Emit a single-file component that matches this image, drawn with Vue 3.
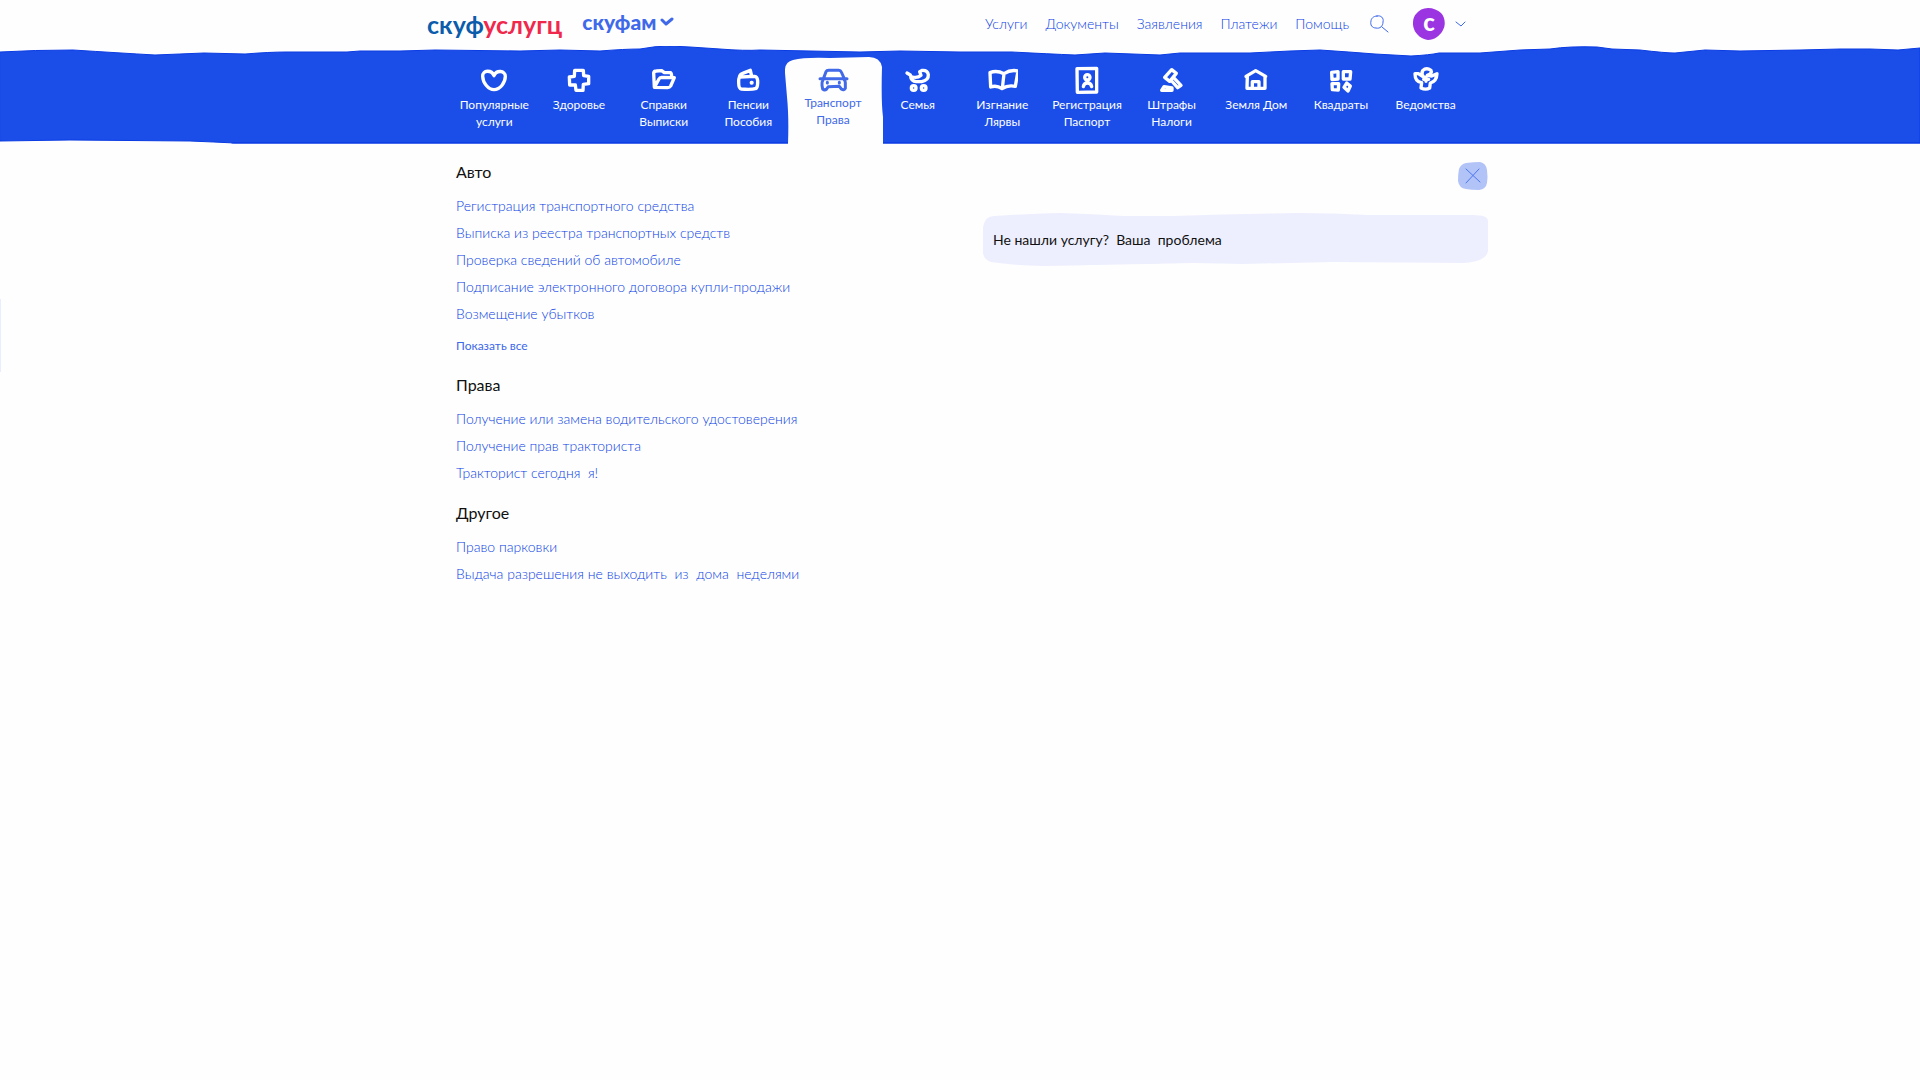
<script setup>
import { ref } from 'vue'

const menu = ['Услуги', 'Документы', 'Заявления', 'Платежи', 'Помощь']

const categories = [
  {
    lines: ['Популярные', 'услуги'],
    box: '117 27 96 96',
    d: 'M165 62C158 44 130 44 131 64C132 84 148 104 165 104C184 104 199 82 199 64C199 46 172 44 165 62Z',
  },
  {
    lines: ['Здоровье'],
    box: '369 27 96 96',
    d: 'M404 46L430 46L431 62L446 64L446 86L430 88L429 106L408 106L406 90L389 90L388 66L403 64Z',
  },
  {
    lines: ['Справки', 'Выписки'],
    box: '623 27 96 96',
    d: 'M642 96L640 54Q641 48 648 48L664 47L672 53L690 53Q694 54 694 66M642 97L656 72Q658 67 664 67L702 68L691 93Q688 98 682 98Z',
  },
  {
    lines: ['Пенсии', 'Пособия'],
    box: '38 42 96 96',
    d: 'M62 81Q57 84 58 98Q58 116 66 117Q96 120 111 115Q116 108 115 92Q114 80 106 79ZM60 82Q62 72 70 70L93 61L97 78M96 97L98 97L98 99L96 99Z',
  },
  {
    lines: ['Транспорт', 'Права'],
    active: true,
    box: '295 42 96 96',
    d: 'M304 86L385 86M315 84L322 65Q324 61 330 61L360 61Q366 61 368 66L376 84M313 90Q309 96 310 106L312 117Q318 122 324 117L329 110L362 109L368 117Q376 122 380 115L380 98Q380 92 376 88M326 97V99M362 97V99',
  },
  {
    lines: ['Семья'],
    box: '545 42 96 96',
    d: 'M560 69L570 75Q572 94 588 95L604 95Q625 91 624 74Q622 60 606 61L598 65L602 76Q592 85 576 81M587 114A7 7 0 1 1 573 114A7 7 0 1 1 587 114M617 114A7 7 0 1 1 603 114A7 7 0 1 1 617 114',
  },
  {
    lines: ['Изгнание', 'Лярвы'],
    box: '80 27 96 96',
    d: 'M92 53L94 96Q112 90 128 101Q146 89 168 94L176 48Q154 43 134 56Q112 45 92 53ZM134 56L129 100',
  },
  {
    lines: ['Регистрация', 'Паспорт'],
    box: '332 27 96 96',
    d: 'M350 41L409 40L409 111L351 112ZM389 67A8 8 0 1 1 373 67A8 8 0 1 1 389 67M369 95Q371 84 381 84Q392 84 394 95',
  },
  {
    lines: ['Штрафы', 'Налоги'],
    box: '585 27 96 96',
    d: 'M611 67L632 44L646 55L626 79ZM638 68L660 91L650 98L632 78M602 106L609 95L633 99L633 106Z',
  },
  {
    lines: ['Земля Дом'],
    box: '91 27 96 96',
    d: 'M109 64L138 47L168 64M113 64L112 100L166 100L166 66M128 98L128 80L148 80L148 98',
  },
  {
    lines: ['Квадраты'],
    box: '345 27 96 96',
    d: 'M365 52L384 50L384 72L366 74ZM400 50L422 50L420 72L400 72ZM366 86L386 86L385 105L367 104ZM410 84L421 93L414 108L402 97Z',
  },
  {
    lines: ['Ведомства'],
    box: '599 27 96 96',
    d: 'M614 56Q614 80 634 83L632 99Q646 106 658 99L660 84Q679 79 680 56L664 63L651 61Q667 54 662 46Q648 36 637 47Q632 56 640 66L624 56ZM647 66V79M640 73H655',
  },
]

const groups = [
  {
    title: 'Авто',
    links: [
      'Регистрация транспортного средства',
      'Выписка из реестра транспортных средств',
      'Проверка сведений об автомобиле',
      'Подписание электронного договора купли-продажи',
      'Возмещение убытков',
    ],
    more: 'Показать все',
  },
  {
    title: 'Права',
    links: [
      'Получение или замена водительского удостоверения',
      'Получение прав тракториста',
      'Тракторист сегодня \u00a0я!',
    ],
  },
  {
    title: 'Другое',
    links: ['Право парковки', 'Выдача разрешения не выходить \u00a0из \u00a0дома \u00a0неделями'],
  },
]

const query = ref('')
</script>

<template>
  <div class="page">
    <header class="top">
      <div class="top-inner">
        <a class="logo" href="#"><span class="logo-blue">скуф</span><span class="logo-red">услугц</span></a>
        <button class="audience" type="button">
          скуфам
          <svg width="14" height="10" viewBox="0 0 14 10" aria-hidden="true">
            <path d="M2 3L6 7L12 2" />
          </svg>
        </button>
        <nav class="menu">
          <a v-for="item in menu" :key="item" href="#">{{ item }}</a>
        </nav>
        <button class="search" type="button" aria-label="Поиск">
          <svg width="20" height="20" viewBox="0 0 20 20" aria-hidden="true">
            <path d="M8 2C12 1 15 4 14 8C14 12 11 15 7 14C3 14 1 11 2 7C2 5 4 2 8 2ZM13 13L19 18" />
          </svg>
        </button>
        <button class="user" type="button" aria-label="Профиль">
          <span class="avatar">
            <svg width="32" height="32" viewBox="0 0 32 32" aria-hidden="true">
              <path d="M15 0C20 0 25 2 28 5C32 9 33 17 30 22C27 28 21 32 15 32C9 31 3 27 1 21C-1 16 0 9 3 6C6 2 10 0 15 0Z" />
            </svg>
            <b>с</b>
          </span>
          <svg class="user-arrow" width="12" height="8" viewBox="0 0 12 8" aria-hidden="true">
            <path d="M1 2L6 6L10 2" />
          </svg>
        </button>
      </div>
    </header>

    <nav class="band">
      <svg class="band-bg" viewBox="0 0 1920 98" preserveAspectRatio="none" aria-hidden="true">
        <path
          class="band-fill"
          d="M0 6Q35 4 73 4Q120 7 155 9Q180 8 204 7L245 8Q270 6 286 6L347 6L360 5L400 5L435 4L520 5L560 4L600 5Q625 3 640 3Q655 0 670 0L690 1L720 3Q745 5 760 4Q810 5 860 6L900 5L960 6L1012 6Q1050 8 1075 9L1105 7L1160 9L1180 7L1250 7L1290 5L1320 4Q1350 6 1375 8L1411 10Q1430 9 1439 7L1480 7L1520 4L1550 3Q1570 0 1597 1L1612 3L1640 4Q1665 7 1675 7L1705 4L1740 5L1800 4L1840 3L1870 3L1898 4L1920 2V97H235Q215 96 190 95L70 94L0 95Z"
        />
        <path class="band-line" d="M232 97H1920" />
      </svg>
      <ul class="categories">
        <li v-for="cat in categories" :key="cat.lines[0]">
          <a href="#" class="category" :class="{ active: cat.active }">
            <svg v-if="cat.active" class="tab" viewBox="0 0 98 87" aria-hidden="true">
              <path d="M0 16Q-1 5 8 3Q20 0 45 1L84 0Q95 0 97 10Q96 45 98 60L98 87L3 87Q4 60 2 40Z" />
            </svg>
            <svg class="icon" :viewBox="cat.box" aria-hidden="true"><path :d="cat.d" /></svg>
            <span v-for="line in cat.lines" :key="line" class="label">{{ line }}</span>
          </a>
        </li>
      </ul>
    </nav>

    <main class="content">
      <div class="column">
        <section v-for="group in groups" :key="group.title" class="group">
          <h2>{{ group.title }}</h2>
          <ul>
            <li v-for="link in group.links" :key="link"><a href="#">{{ link }}</a></li>
          </ul>
          <button v-if="group.more" class="more" type="button">{{ group.more }}</button>
        </section>
      </div>
      <aside class="side">
        <button class="close" type="button" aria-label="Закрыть">
          <svg width="30" height="28" viewBox="0 0 30 28" aria-hidden="true">
            <path class="close-bg" d="M8 1Q16 0 22 0Q28 1 29 8Q30 15 29 21Q28 27 21 28Q13 28 8 27Q1 26 0 19Q0 12 1 7Q3 2 8 1Z" />
            <path class="close-x" d="M8 7L22 20M21 7L8 21" />
          </svg>
        </button>
        <div class="finder">
          <svg class="finder-bg" viewBox="0 0 505 53" preserveAspectRatio="none" aria-hidden="true">
            <path d="M0 14Q2 3 11 3Q40 1 78 0Q110 1 140 3L190 3Q250 1 315 0Q350 0 385 2L490 2Q505 2 505 8L505 38Q503 49 480 50L350 49L260 51L210 50Q120 52 60 53Q25 52 8 49Q1 47 0 40Z" />
          </svg>
          <input v-model="query" type="text" aria-label="Поиск услуги" placeholder="Не нашли услугу?  Ваша  проблема" />
        </div>
      </aside>
    </main>
    <div class="edge"></div>
  </div>
</template>

<style>
body {
  margin: 0;
  background: #fff;
}
</style>

<style scoped>
.page {
  position: relative;
  min-height: 100vh;
  background: #fefefe;
  color: #111;
  font-family: 'Lato', 'Noto Sans', sans-serif;
  font-size: 14px;
}
a {
  color: #0a3fe4;
  text-decoration: none;
}
ul {
  margin: 0;
  padding: 0;
  list-style: none;
}
button {
  padding: 0;
  border: 0;
  background: none;
  color: #3c68ea;
  font-family: inherit;
  cursor: pointer;
}
svg {
  display: block;
  fill: none;
  stroke-linecap: round;
  stroke-linejoin: round;
}

.top-inner {
  display: flex;
  align-items: center;
  box-sizing: border-box;
  max-width: 1066px;
  height: 46px;
  margin: 0 auto;
  padding-top: 1px;
}
.logo {
  font-size: 25px;
  font-weight: 700;
  line-height: 42px;
}
.logo-blue {
  color: #0b5cab;
}
.logo-red {
  color: #f0284c;
}
.audience {
  display: flex;
  align-items: center;
  gap: 4px;
  margin: 0 0 4px 20px;
  color: #4069ea;
  font-size: 21px;
  font-weight: 900;
  line-height: 38px;
}
.audience svg {
  stroke: #4069ea;
  stroke-width: 3;
}
.menu {
  display: flex;
  gap: 18px;
  margin-left: auto;
  font-weight: 300;
  line-height: 44px;
}
.search {
  margin-left: 20px;
}
.search svg,
.user-arrow {
  stroke: #3c68ea;
  stroke-width: 1;
}
.user {
  display: flex;
  align-items: center;
  gap: 10px;
  margin: 0 26px 0 24px;
}
.avatar {
  position: relative;
  width: 32px;
  height: 32px;
}
.avatar svg {
  fill: #9b35e2;
}
.avatar b {
  position: absolute;
  inset: 0;
  color: #fff;
  font-size: 24px;
  font-weight: 900;
  line-height: 27px;
  text-align: center;
}

.band {
  position: relative;
  height: 97px;
}
.band-bg {
  position: absolute;
  inset: 0;
  width: 100%;
  height: 98px;
}
.band-fill {
  fill: #1b4ee9;
  stroke: #0a3be3;
  stroke-width: 1;
}
.band-line {
  stroke: #0a3be3;
  stroke-width: 1;
}
.categories {
  position: relative;
  display: grid;
  grid-template-columns: repeat(12, 1fr);
  max-width: 1016px;
  height: 97px;
  margin: 0 auto;
}
.category {
  position: relative;
  display: flex;
  flex-direction: column;
  align-items: center;
  height: 97px;
  padding-top: 18px;
  box-sizing: border-box;
  color: #fff;
}
.icon {
  position: relative;
  width: 32px;
  height: 32px;
  stroke: currentColor;
  stroke-width: 10;
}
.label {
  position: relative;
  font-size: 12px;
  line-height: 17px;
  white-space: nowrap;
}
.category.active {
  color: #4169e8;
}
.active .icon {
  margin-bottom: -2px;
  stroke-width: 9;
}
.tab {
  position: absolute;
  bottom: -1px;
  left: 50%;
  width: 98px;
  height: 87px;
  margin-left: -48px;
  fill: #fefefe;
}

.content {
  display: grid;
  grid-template-columns: 1fr 505px;
  align-items: start;
  box-sizing: border-box;
  max-width: 1056px;
  margin: 0 auto;
  padding: 17px 0 40px 24px;
}
.group {
  margin-bottom: 15px;
}
h2 {
  margin: 0 0 8px;
  font-size: 16px;
  font-weight: 400;
  line-height: 24px;
}
.group li {
  font-weight: 300;
  line-height: 27px;
}
.more {
  display: block;
  margin-top: 7px;
  font-size: 12px;
  line-height: 24px;
}
.side {
  display: flex;
  flex-direction: column;
  align-items: flex-end;
  gap: 23px;
  padding-top: 2px;
}
.close-bg {
  fill: #b2c3f8;
}
.close-x {
  stroke: #4b77ee;
  stroke-width: 1;
}
.finder {
  position: relative;
  width: 100%;
  height: 53px;
}
.finder-bg {
  position: absolute;
  inset: 0;
  width: 100%;
  height: 53px;
  fill: #eeeffe;
}
input {
  position: relative;
  width: 100%;
  height: 53px;
  box-sizing: border-box;
  padding: 0 10px;
  border: 0;
  background: none;
  color: #111;
  font-family: inherit;
  font-size: 14px;
}
input::placeholder {
  color: #111;
  opacity: 1;
  white-space: pre;
}
.edge {
  position: absolute;
  top: 299px;
  left: 0;
  width: 1px;
  height: 73px;
  background: #e9edff;
}
</style>
